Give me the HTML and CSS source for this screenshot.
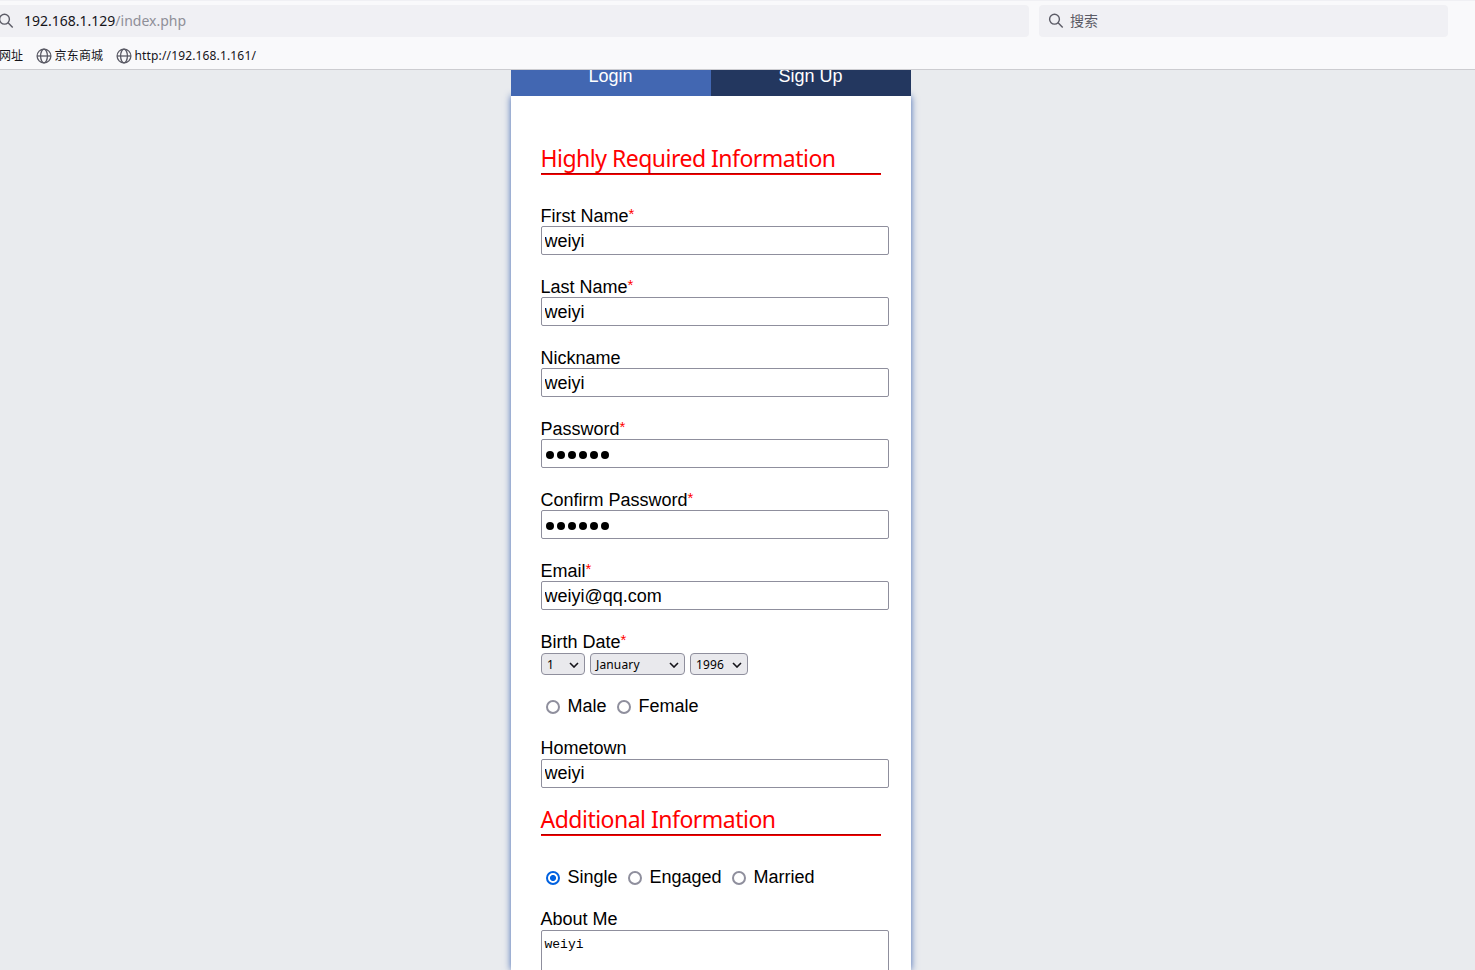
FILE: index.html
```html
<!DOCTYPE html>
<html lang="zh">
<head>
<meta charset="utf-8">
<title>Sign Up</title>
<link rel="stylesheet" href="styles.css">
</head>
<body>
<header class="browser">
  <div class="toolbar">
    <div class="bar address">
      <svg class="lens" viewBox="0 0 16 16"><circle cx="6.5" cy="6.2" r="4.9"/><path d="M10.1 9.8l4.6 4.6"/></svg>
      <span class="url">192.168.1.129<span class="path">/index.php</span></span>
    </div>
    <div class="bar search">
      <svg class="lens" viewBox="0 0 16 16"><circle cx="6.5" cy="6.2" r="4.9"/><path d="M10.1 9.8l4.6 4.6"/></svg>
      <span>搜索</span>
    </div>
  </div>
  <nav class="bookmarks">
    <span class="mark first">网址</span>
    <span class="mark second"><svg class="globe" viewBox="0 0 16 16"><circle cx="8" cy="8" r="6.9"/><ellipse cx="8" cy="8" rx="3.4" ry="6.9"/><path d="M1 8h14"/></svg>京东商城</span>
    <span class="mark"><svg class="globe" viewBox="0 0 16 16"><circle cx="8" cy="8" r="6.9"/><ellipse cx="8" cy="8" rx="3.4" ry="6.9"/><path d="M1 8h14"/></svg><span class="link">http://192.168.1.161/</span></span>
  </nav>
</header>
<main class="page">
  <div class="tabs"><div class="tab login"><span>Login</span></div><div class="tab signup"><span>Sign Up</span></div></div>
  <form class="card">
    <h2 class="title">Highly Required Information</h2>
    <div class="field"><label>First Name<sup>*</sup></label><input class="box" type="text" value="weiyi"></div>
    <div class="field"><label>Last Name<sup>*</sup></label><input class="box" type="text" value="weiyi"></div>
    <div class="field"><label>Nickname</label><input class="box" type="text" value="weiyi"></div>
    <div class="field"><label>Password<sup>*</sup></label><div class="box dots"><i></i><i></i><i></i><i></i><i></i><i></i></div></div>
    <div class="field"><label>Confirm Password<sup>*</sup></label><div class="box dots"><i></i><i></i><i></i><i></i><i></i><i></i></div></div>
    <div class="field"><label>Email<sup>*</sup></label><input class="box" type="text" value="weiyi@qq.com"></div>
    <div class="birth">
      <label>Birth Date<sup>*</sup></label>
      <div class="selects">
        <div class="select day">1<svg viewBox="0 0 10 6"><path d="M1 1l4 4 4-4"/></svg></div>
        <div class="select month">January<svg viewBox="0 0 10 6"><path d="M1 1l4 4 4-4"/></svg></div>
        <div class="select year">1996<svg viewBox="0 0 10 6"><path d="M1 1l4 4 4-4"/></svg></div>
      </div>
    </div>
    <div class="radios gender"><b class="radio"></b><span>Male</span><b class="radio"></b><span>Female</span></div>
    <div class="field home"><label>Hometown</label><input class="box" type="text" value="weiyi"></div>
    <h2 class="title">Additional Information</h2>
    <div class="radios"><b class="radio on"></b><span>Single</span><b class="radio"></b><span>Engaged</span><b class="radio"></b><span>Married</span></div>
    <div class="about"><label>About Me</label><div class="area">weiyi</div></div>
  </form>
</main>
</body>
</html>
```
FILE: styles.css
```css
* { box-sizing: border-box; }
body {
  margin: 0;
  height: 970px;
  overflow: hidden;
  display: flex;
  flex-direction: column;
  background: #e9ebee;
  color: #000;
  font: 18px/20px "Liberation Sans", Arial, sans-serif;
}
.browser {
  flex: none;
  height: 70px;
  background: #f9f9fb;
  border-top: 1px solid #f0f0f4;
  border-bottom: 1px solid #ccccd0;
  font: 12px/16px "Noto Sans", "Noto Sans CJK SC", sans-serif;
}
.toolbar { display: flex; gap: 10px; padding-top: 4px; }
.bar { height: 32px; background: #f0f0f4; display: flex; align-items: center; font-size: 14px; line-height: 20px; }
.address { width: 1029px; border-radius: 0 4px 4px 0; color: #15141a; }
.address .lens { margin: 0 10px 0 -2px; }
.search { width: 409px; border-radius: 4px; padding-left: 9px; gap: 6px; color: #5b5b66; }
.path { color: #8f8f98; }
.lens { width: 16px; height: 16px; fill: none; stroke: #5b5b66; stroke-width: 1.4; }
.bookmarks { display: flex; height: 32px; align-items: center; padding-top: 5px; color: #15141a; }
.mark { display: flex; align-items: center; gap: 3px; white-space: nowrap; }
.first { width: 35px; margin-left: -1px; }
.second { width: 80px; margin-left: 1.5px; letter-spacing: 0.2px; }
.link { letter-spacing: 0.15px; }
.globe { width: 16px; height: 16px; fill: none; stroke: #5b5b66; stroke-width: 1.3; }
.page { flex: 1; min-height: 0; width: 400px; margin-left: 511px; display: flex; flex-direction: column; }
.tabs { flex: none; height: 26px; display: flex; overflow: hidden; color: #fff; z-index: 1; }
.tab { width: 200px; text-align: center; }
.tab span { display: block; margin: -4px 1px 0 0; }
.login { background: #4267b2; }
.signup { background: #23375f; }
.card { flex: 1; min-height: 0; padding: 47px 22px 0 30px; background: #fff; box-shadow: 0 0 7px #4267b2; }
.title {
  width: 340px;
  height: 32px;
  margin: 0 0 31px;
  border-bottom: 1px solid #f00;
  box-shadow: inset 0 -1px #b00000;
  color: #f00;
  font: 23px/31px "Noto Sans", sans-serif;
  letter-spacing: -0.51px;
  text-indent: -0.5px;
  white-space: nowrap;
}
label { display: block; height: 20px; text-indent: -0.5px; }
sup { color: #f00; font-size: 15px; line-height: 0; vertical-align: 3px; }
.field { height: 71px; }
.box {
  display: block;
  width: 348px;
  height: 29px;
  padding: 1px 3px 0 2.5px;
  border: 1px solid #8f8f9d;
  border-radius: 2px;
  outline: 0;
  background: #fff;
  color: #000;
  font: 18px/20px "Liberation Sans", Arial, sans-serif;
}
.dots { display: flex; align-items: center; gap: 3px; padding: 2px 4px 0; }
.dots i { width: 8px; height: 8px; border-radius: 50%; background: #000; }
.birth { height: 64px; }
.selects { display: flex; gap: 5px; padding-top: 1px; }
.select {
  height: 22px;
  display: flex;
  align-items: center;
  justify-content: space-between;
  padding: 1px 5px 0;
  border: 1px solid #8f8f9d;
  border-radius: 4px;
  background: #e9e9ed;
  font: 12px/20px "Noto Sans", sans-serif;
  letter-spacing: 0.15px;
}
.select svg { width: 10px; height: 6px; fill: none; stroke: #15141a; stroke-width: 1.6; }
.day { width: 44px; }
.month { width: 95px; }
.year { width: 58px; }
.radios { height: 42px; display: flex; align-items: flex-start; padding-left: 5px; }
.radio { flex: none; width: 14px; height: 14px; margin: 4px 7.5px 0 0; border: 2px solid #8f8f9d; border-radius: 50%; background: #fff; }
.radios span { margin-right: 10.4px; }
.on { border-color: #0061e0; background: radial-gradient(circle, #0061e0 2.7px, #fff 3.3px); }
.home { height: 66px; }
.home label { height: 21px; }
.home .box { padding: 0 3px 1px 2.5px; }
.about label { height: 21px; }
.area {
  width: 348px;
  height: 60px;
  padding: 5px 3px 0 2.5px;
  border: 1px solid #8f8f9d;
  border-radius: 2px;
  font: 13px/18px "Liberation Mono", monospace;
}
```
